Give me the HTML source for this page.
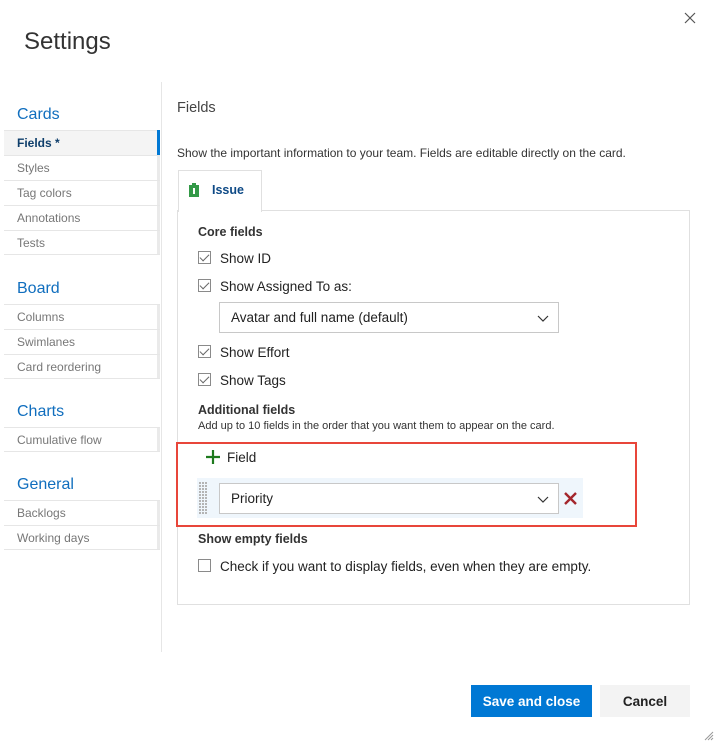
<!DOCTYPE html>
<html><head><meta charset="utf-8"><style>
*{box-sizing:border-box;margin:0;padding:0}
body{width:716px;height:743px;background:#fff;font-family:"Liberation Sans",sans-serif;color:#333;position:relative;overflow:hidden}
.a{position:absolute;white-space:nowrap}
.sec{position:absolute;left:17px;font-size:16px;color:#106ebe}
.it{position:absolute;left:4px;width:156px;height:25px;border-top:1px solid #e6e6e6;font-size:12px;color:#777;padding-left:13px;line-height:25px}
.it::after{content:"";position:absolute;right:0;top:0;width:3px;height:100%;background:#eaeaea}
.cb{position:absolute;width:13px;height:13px;border:1px solid #8a8a8a;background:#fff}
.cb.on::after{content:"";position:absolute;left:3px;top:0px;width:4px;height:8px;border:solid #666;border-width:0 1px 1px 0;transform:rotate(45deg)}
.t13{font-size:13.5px;color:#222}
.dd{position:absolute;border:1px solid #c8c8c8;background:#fff;font-size:13.5px;color:#222;padding-left:11px;display:flex;align-items:center}
.chev{position:absolute;right:9px;top:50%;margin-top:-6px}
</style></head><body>
<div class="a" style="left:24px;top:28px;font-size:24px;color:#333">Settings</div>
<svg class="a" style="left:684px;top:12px" width="12" height="12"><path d="M1 1L11 11M11 1L1 11" stroke="#555" stroke-width="1.2"/></svg>
<div class="a" style="left:161px;top:82px;width:1px;height:570px;background:#e6e6e6"></div>

<div class="sec" style="top:106px">Cards</div>
<div class="it" style="top:130px;background:#f4f4f4;color:#0e3e6b;font-weight:bold">Fields *</div>
<div class="a" style="left:157px;top:130px;width:3px;height:25px;background:#0078d4"></div>
<div class="it" style="top:155px">Styles</div>
<div class="it" style="top:180px">Tag colors</div>
<div class="it" style="top:205px">Annotations</div>
<div class="it" style="top:230px;border-bottom:1px solid #e6e6e6">Tests</div>

<div class="sec" style="top:280px">Board</div>
<div class="it" style="top:304px">Columns</div>
<div class="it" style="top:329px">Swimlanes</div>
<div class="it" style="top:354px;border-bottom:1px solid #e6e6e6">Card reordering</div>

<div class="sec" style="top:403px">Charts</div>
<div class="it" style="top:427px;border-bottom:1px solid #e6e6e6">Cumulative flow</div>

<div class="sec" style="top:476px">General</div>
<div class="it" style="top:500px">Backlogs</div>
<div class="it" style="top:525px;border-bottom:1px solid #e6e6e6">Working days</div>

<div class="a" style="left:177px;top:100px;font-size:14.5px;color:#444">Fields</div>
<div class="a" style="left:177px;top:146px;font-size:12px;color:#333">Show the important information to your team. Fields are editable directly on the card.</div>

<div class="a" style="left:177px;top:210px;width:513px;height:395px;border:1px solid #e0e0e0"></div>
<div class="a" style="left:178px;top:170px;width:84px;height:42px;border:1px solid #e0e0e0;border-bottom:none;background:#fff"></div>
<svg class="a" style="left:189px;top:183px" width="10" height="14"><rect x="0" y="2" width="10" height="12" fill="#339947"/><rect x="3" y="0" width="4" height="3" fill="#339947"/><rect x="4" y="5" width="2" height="6" fill="#fff"/></svg>
<div class="a" style="left:212px;top:183px;font-size:12.5px;font-weight:bold;color:#0e4a86">Issue</div>

<div class="a" style="left:198px;top:225px;font-size:12.5px;font-weight:bold;color:#333">Core fields</div>
<div class="cb on" style="left:198px;top:251px"></div><div class="a t13" style="left:220px;top:251px">Show ID</div>
<div class="cb on" style="left:198px;top:279px"></div><div class="a t13" style="left:220px;top:279px">Show Assigned To as:</div>
<div class="dd" style="left:219px;top:302px;width:340px;height:31px">Avatar and full name (default)<svg class="chev" width="12" height="12"><path d="M1 4L6 9L11 4" fill="none" stroke="#333" stroke-width="1.2"/></svg></div>
<div class="cb on" style="left:198px;top:345px"></div><div class="a t13" style="left:220px;top:345px">Show Effort</div>
<div class="cb on" style="left:198px;top:373px"></div><div class="a t13" style="left:220px;top:373px">Show Tags</div>

<div class="a" style="left:198px;top:403px;font-size:12.5px;font-weight:bold;color:#333">Additional fields</div>
<div class="a" style="left:198px;top:420px;font-size:11px;color:#333">Add up to 10 fields in the order that you want them to appear on the card.</div>

<div class="a" style="left:176px;top:442px;width:461px;height:85px;border:2px solid #e8463a"></div>
<svg class="a" style="left:206px;top:450px" width="14" height="14"><path d="M7 0V14M0 7H14" stroke="#1e7a1e" stroke-width="2.2"/></svg>
<div class="a t13" style="left:227px;top:450px">Field</div>
<div class="a" style="left:197px;top:478px;width:386px;height:40px;background:#eff6fc"></div>
<svg class="a" style="left:199px;top:482px" width="10" height="32"><defs><pattern id="d" width="3" height="3" patternUnits="userSpaceOnUse"><rect width="2" height="2" fill="#b4b4b4"/></pattern></defs><rect width="9" height="32" fill="url(#d)"/></svg>
<div class="dd" style="left:219px;top:483px;width:340px;height:31px">Priority<svg class="chev" width="12" height="12"><path d="M1 4L6 9L11 4" fill="none" stroke="#333" stroke-width="1.2"/></svg></div>
<svg class="a" style="left:564px;top:492px" width="13" height="13"><path d="M1 1L12 12M12 1L1 12" stroke="#a4262c" stroke-width="2.4"/></svg>

<div class="a" style="left:198px;top:532px;font-size:12.5px;font-weight:bold;color:#333">Show empty fields</div>
<div class="cb" style="left:198px;top:559px"></div><div class="a t13" style="left:220px;top:559px">Check if you want to display fields, even when they are empty.</div>

<div class="a" style="left:471px;top:685px;width:121px;height:32px;background:#0078d4;color:#fff;font-size:13.5px;font-weight:bold;text-align:center;line-height:33px">Save and close</div>
<div class="a" style="left:600px;top:685px;width:90px;height:32px;background:#f3f3f3;color:#222;font-size:13.5px;font-weight:bold;text-align:center;line-height:33px">Cancel</div>
<svg class="a" style="left:704px;top:731px" width="10" height="10"><path d="M9 1L1 9M9 4L4 9M9 7L7 9" stroke="#999" stroke-width="1"/></svg>
</body></html>
